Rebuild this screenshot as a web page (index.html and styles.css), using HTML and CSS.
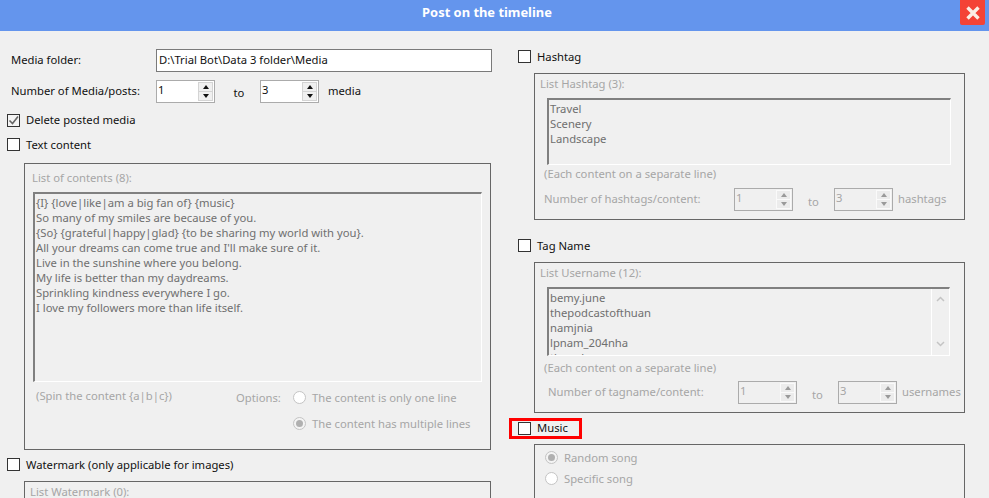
FILE: index.html
```html
<!DOCTYPE html>
<html lang="en">
<head>
<meta charset="utf-8">
<title>Post on the timeline</title>
<link rel="stylesheet" href="styles.css">
</head>
<body>
<div class="window">
  <header class="titlebar">
    <h1 class="title">Post on the timeline</h1>
    <button class="close" aria-label="Close"><svg width="16" height="16" viewBox="0 0 16 16"><path d="M2.5 2.5L13.5 13.5M13.5 2.5L2.5 13.5" stroke="#fbefe6" stroke-width="3.4" fill="none"/></svg></button>
  </header>
  <main class="content">
    <section class="col col-left">
      <div class="row row-folder">
        <span class="label label-main">Media folder:</span>
        <div class="textbox">D:\Trial Bot\Data 3 folder\Media</div>
      </div>
      <div class="row row-count">
        <span class="label label-main">Number of Media/posts:</span>
        <div class="spin"><span class="spin-val">1</span><span class="spin-btns"><i class="up"></i><i class="down"></i></span></div>
        <span class="to to-main">to</span>
        <div class="spin"><span class="spin-val">3</span><span class="spin-btns"><i class="up"></i><i class="down"></i></span></div>
        <span class="unit-main">media</span>
      </div>
      <label class="check check-delete"><span class="box checked"><svg width="11" height="11" viewBox="0 0 11 11"><path d="M1.5 5.5L4.5 8.5L10 1.5" stroke="#666" stroke-width="1.6" fill="none"/></svg></span><span class="nudge">Delete posted media</span></label>
      <label class="check check-text"><span class="box"></span>Text content</label>
      <div class="group group-text disabled">
        <div class="glabel">List of contents (8):</div>
        <div class="memo memo-text">{I} {love|like|am a big fan of} {music}<br>So many of my smiles are because of you.<br>{So} {grateful|happy|glad} {to be sharing my world with you}.<br>All your dreams can come true and I'll make sure of it.<br>Live in the sunshine where you belong.<br>My life is better than my daydreams.<br>Sprinkling kindness everywhere I go.<br>I love my followers more than life itself.</div>
        <div class="spin-opts">
          <span class="hint hint-spin">(Spin the content {a|b|c})</span>
          <span class="opt-title">Options:</span>
          <div class="opt-list">
            <div class="radio-row"><span class="radio"></span>The content is only one line</div>
            <div class="radio-row"><span class="radio on"></span>The content has multiple lines</div>
          </div>
        </div>
      </div>
      <label class="check check-water"><span class="box"></span>Watermark (only applicable for images)</label>
      <div class="group group-water disabled">
        <div class="glabel glabel-water">List Watermark (0):</div>
      </div>
    </section>
    <section class="col col-right">
      <label class="check check-hash"><span class="box"></span>Hashtag</label>
      <div class="group group-hash disabled">
        <div class="glabel">List Hashtag (3):</div>
        <div class="memo memo-hash">Travel<br>Scenery<br>Landscape</div>
        <div class="hint hint-line">(Each content on a separate line)</div>
        <div class="num-row">
          <span class="num-label">Number of hashtags/content:</span>
          <div class="spin"><span class="spin-val">1</span><span class="spin-btns"><i class="up"></i><i class="down"></i></span></div>
          <span class="to">to</span>
          <div class="spin"><span class="spin-val">3</span><span class="spin-btns"><i class="up"></i><i class="down"></i></span></div>
          <span class="unit">hashtags</span>
        </div>
      </div>
      <label class="check check-tag"><span class="box"></span>Tag Name</label>
      <div class="group group-tag disabled">
        <div class="glabel">List Username (12):</div>
        <div class="memo memo-tag">
          <div class="memo-lines">bemy.june<br>thepodcastofthuan<br>namjnia<br>lpnam_204nha<br>thuanle</div>
          <div class="scrollbar">
            <svg width="9" height="6" viewBox="0 0 9 6"><path d="M1 5L4.5 1.5L8 5" stroke="#c4c4c4" stroke-width="1.5" fill="none"/></svg>
            <svg width="9" height="6" viewBox="0 0 9 6"><path d="M1 1L4.5 4.5L8 1" stroke="#c4c4c4" stroke-width="1.5" fill="none"/></svg>
          </div>
        </div>
        <div class="hint hint-line hint-tag">(Each content on a separate line)</div>
        <div class="num-row num-row-tag">
          <span class="num-label">Number of tagname/content:</span>
          <div class="spin"><span class="spin-val">1</span><span class="spin-btns"><i class="up"></i><i class="down"></i></span></div>
          <span class="to">to</span>
          <div class="spin"><span class="spin-val">3</span><span class="spin-btns"><i class="up"></i><i class="down"></i></span></div>
          <span class="unit">usernames</span>
        </div>
      </div>
      <div class="music-mark"><label class="check check-music"><span class="box"></span><span class="nudge">Music</span></label></div>
      <div class="group group-music disabled">
        <div class="radio-row"><span class="radio on"></span>Random song</div>
        <div class="radio-row"><span class="radio"></span>Specific song</div>
      </div>
    </section>
  </main>
</div>
</body>
</html>
```
FILE: styles.css
```css
* { box-sizing: border-box; }
html, body { margin: 0; padding: 0; }
body {
  width: 989px; height: 498px; overflow: hidden;
  background: #f0f0f0; color: #111;
  font: 11.25px/15px "Noto Sans", "Liberation Sans", sans-serif;
}
.window { width: 989px; height: 498px; overflow: hidden; }

.titlebar {
  height: 31px; background: #6495ed; padding-right: 15px;
  display: flex; justify-content: center; position: relative;
}
.title { margin: 0; font-size: 12.9px; line-height: 25px; font-weight: 700; color: #fff; }
.close {
  position: absolute; left: 960px; top: 0; width: 25px; height: 25px;
  padding: 0; border: 0; background: #f44336; border-radius: 0 0 2px 2px;
  display: flex; align-items: center; justify-content: center;
}

.content { display: flex; align-items: flex-start; }
.col { flex: none; }
.col-left { width: 509px; padding-top: 18px; }
.col-right { width: 480px; padding-top: 19px; }

.row { display: flex; align-items: center; height: 23px; margin-left: 11px; }
.row-count { margin-top: 8px; }
.label-main { width: 145px; flex: none; margin-bottom: 2px; }
.unit-main { margin-left: 9px; margin-bottom: 2px; }
.textbox {
  width: 336px; height: 23px; padding-left: 2px;
  background: #fff; border: 1px solid #7a7a7a; line-height: 19px;
}

.spin {
  width: 59px; height: 23px; flex: none; position: relative;
  background: #fff; border: 1px solid #ababab;
  display: flex; justify-content: space-between;
}
.spin-val { padding-left: 1px; line-height: 17px; }
.spin-btns {
  width: 15px; margin: 1px 1px 1px 0; padding: 1px 0;
  background: #d4d4d4; display: flex; flex-direction: column; gap: 1px;
}
.spin-btns i { flex: 1; margin: 0 1px; background: #f0f0f0; position: relative; display: flex; align-items: center; justify-content: center; }
.spin-btns i::before { content: ""; border-left: 3.5px solid transparent; border-right: 3.5px solid transparent; }
.spin-btns .up::before { border-bottom: 4px solid #111; }
.spin-btns .down::before { border-top: 4px solid #111; }
.to-main { width: 26px; margin: 2px 8px 0 11px; text-align: center; }

.check { display: flex; align-items: center; height: 13px; white-space: nowrap; }
.nudge { margin-bottom: 2px; }
.box {
  width: 13px; height: 13px; flex: none; margin-right: 6px;
  background: #fff; border: 1px solid #333;
  display: flex; align-items: center; justify-content: center;
}
.box.checked { background: #f4f4f4; }
.col-left .check { margin-left: 7px; }
.check-delete { margin-top: 11px; }
.check-text { margin-top: 11px; }
.check-water { margin-top: 8px; }
.check-hash, .check-tag { margin-left: 9px; }
.check-tag { margin-top: 19px; }

.group { border: 1px solid #666; background: #f0f0f0; }
.disabled { color: #a6a6a6; }
.col-left .group { margin-left: 24px; width: 467px; }
.col-right .group { margin-left: 25px; width: 431px; }
.group-text { height: 287px; margin-top: 12px; padding: 6px 0 0 7px; }
.group-water { height: 60px; margin-top: 10px; padding: 2px 0 0 5px; }
.group-hash { height: 147px; margin-top: 10px; padding: 2px 0 0 5px; }
.group-tag { height: 151px; margin-top: 10px; padding: 2px 0 0 5px; }
.group-music { height: 60px; margin-top: 5px; padding: 5px 0 0 10px; display: flex; flex-direction: column; gap: 6px; }

.memo {
  border: 2px solid #808080; border-right: 1px solid #fff; border-bottom: 1px solid #fff;
  color: #6f6f6f; padding: 1px 0 0 1px; overflow: hidden;
}
.memo-text { width: 449px; height: 190px; margin: 7px 0 0 1px; }
.memo-hash { width: 404px; height: 67px; margin: 7px 0 0 7px; }
.memo-tag { width: 403px; height: 69px; margin: 7px 0 0 7px; display: flex; justify-content: space-between; }
.scrollbar {
  width: 18px; flex: none; margin-top: -1px; padding: 7px 0 8px; border-left: 1px solid #fff;
  display: flex; flex-direction: column; justify-content: space-between; align-items: center;
}

.hint-line { margin: 1px 0 0 4px; }
.hint-tag { margin-top: 4px; }
.num-row { display: flex; align-items: center; height: 23px; margin: 7px 0 0 4px; }
.num-row .num-label { width: 190px; flex: none; margin-bottom: 2px; }
.num-row .to { width: 41px; text-align: center; margin-top: 3px; }
.num-row .unit { margin-left: 5px; margin-bottom: 2px; }
.num-row-tag { margin-top: 6px; margin-left: 8px; }
.disabled .spin { background: #f0f0f0; }
.disabled .spin-btns { background: #fafafa; }
.disabled .spin-btns i { background: #ececec; }
.disabled .spin-btns .up::before { border-bottom-color: #9a9a9a; }
.disabled .spin-btns .down::before { border-top-color: #9a9a9a; }

.spin-opts { display: flex; align-items: flex-start; height: 60px; margin-top: 6px; }
.hint-spin { width: 200px; margin-left: 4px; flex: none; }
.opt-title { width: 57px; flex: none; margin-top: 2px; }
.opt-list { display: flex; flex-direction: column; gap: 11px; margin-top: 2px; }
.radio-row { display: flex; align-items: center; height: 15px; white-space: nowrap; }
.radio {
  width: 13px; height: 13px; flex: none; margin-right: 6px;
  border-radius: 50%; background: #fff; border: 1px solid #c4c4c4;
  display: flex; align-items: center; justify-content: center;
}
.radio.on { background: #f4f4f4; }
.radio.on::before { content: ""; width: 7px; height: 7px; border-radius: 50%; background: #b0b0b0; }

.music-mark {
  width: 73px; height: 21px; margin-top: 5px;
  border: 3px solid #f00; display: flex; align-items: center; padding-left: 6px;
}
```
